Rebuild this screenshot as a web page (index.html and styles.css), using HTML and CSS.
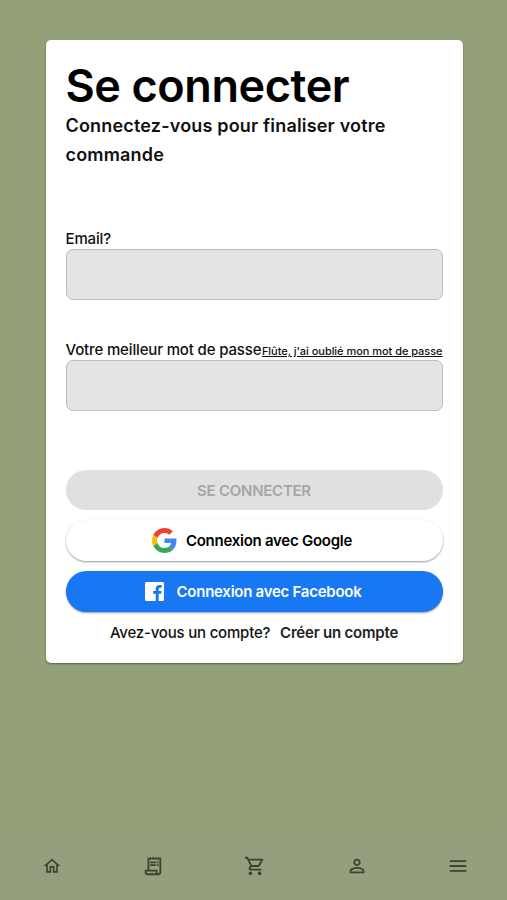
FILE: index.html
```
<!DOCTYPE html>
<html lang="fr">
<head>
  <meta charset="UTF-8" />
  <meta name="viewport" content="width=device-width, initial-scale=1.0"/>
  <title>Se connecter</title>
  <link rel="stylesheet" href="styles.css">
</head>
<body>
  <main class="card">
    <h1>Se connecter</h1>
    <h2>Connectez-vous pour finaliser votre commande</h2>

    <form class="login-form">
      <div class="field">
        <div class="field-head">
          <label for="email">Email?</label>
        </div>
        <input type="email" id="email" name="email" required />
      </div>
      <div class="field">
        <div class="field-head">
          <label for="password">Votre meilleur mot de passe</label>
          <a class="forgot" href="#">Flûte, j'ai oublié mon mot de passe</a>
        </div>
        <input type="password" id="password" name="password" required />
      </div>

      <button class="btn btn-submit" type="submit" disabled>SE CONNECTER</button>
      <button class="btn btn-google" type="button">
        <svg width="25" height="25" viewBox="0 0 48 48">
          <path fill="#EA4335" d="M24 9.5c3.54 0 6.71 1.22 9.21 3.6l6.85-6.85C35.9 2.38 30.47 0 24 0 14.62 0 6.51 5.38 2.56 13.22l7.98 6.19C12.43 13.72 17.74 9.5 24 9.5z"/>
          <path fill="#4285F4" d="M46.98 24.55c0-1.57-.15-3.09-.38-4.55H24v9.02h12.94c-.58 2.96-2.26 5.48-4.78 7.18l7.73 6c4.51-4.18 7.09-10.36 7.09-17.65z"/>
          <path fill="#FBBC05" d="M10.53 28.59c-.48-1.45-.76-2.99-.76-4.59s.27-3.14.76-4.59l-7.98-6.19C.92 16.46 0 20.12 0 24c0 3.88.92 7.54 2.56 10.78l7.97-6.19z"/>
          <path fill="#34A853" d="M24 48c6.48 0 11.93-2.13 15.89-5.81l-7.73-6c-2.15 1.45-4.92 2.3-8.16 2.3-6.26 0-11.57-4.22-13.47-9.91l-7.98 6.19C6.51 42.62 14.62 48 24 48z"/>
        </svg>
        <span>Connexion avec Google</span>
      </button>
      <button class="btn btn-facebook" type="button">
        <svg width="19" height="19" viewBox="0 0 19 19">
          <path fill="#fff" d="M1.5 0h16c.8 0 1.500.7 1.500 1.500v16c0 .8-.7 1.500-1.500 1.500h-3.800v-7.200h2.500l.4-2.900h-2.900V7.200c0-.9.4-1.500 1.500-1.500h1.500V3.100c-.4 0-1.300-.1-2.200-.1-2.300 0-3.800 1.300-3.800 3.800v2.100H8.100v2.900h2.600V19H1.500C.7 19 0 18.300 0 17.500v-16C0 .7.7 0 1.500 0z"/>
        </svg>
        <span>Connexion avec Facebook</span>
      </button>
    </form>

    <p class="signup">Avez-vous un compte? <a href="#">Créer un compte</a></p>
  </main>

  <nav class="bottom-nav">
    <a href="#" aria-label="Accueil">
      <svg width="20" height="20" viewBox="0 0 24 24"><path d="M12 5.690l5 4.500V18h-2v-6H9v6H7v-7.810l5-4.500M12 3L2 12h3v8h6v-6h2v6h6v-8h3L12 3z"/></svg>
    </a>
    <a href="#" aria-label="Commandes">
      <svg width="22" height="22" viewBox="0 0 24 24"><path d="M19.500 3.500L18 2l-1.500 1.500L15 2l-1.500 1.500L12 2l-1.500 1.500L9 2 7.500 3.500 6 2v14H3v3c0 1.660 1.340 3 3 3h12c1.660 0 3-1.340 3-3V2l-1.500 1.500zM15 20H6c-.55 0-1-.45-1-1v-1h10v2zm4-1c0 .55-.45 1-1 1s-1-.45-1-1v-3H8V5h11v14z"/><path d="M9 7h6v2H9zM16 7h2v2h-2zM9 10h6v2H9zM16 10h2v2h-2z"/></svg>
    </a>
    <a href="#" aria-label="Panier">
      <svg width="22" height="22" viewBox="0 0 24 24"><path d="M15.550 13c.75 0 1.410-.41 1.750-1.030l3.580-6.490c.37-.66-.11-1.480-.87-1.480H5.210l-.94-2H1v2h2l3.600 7.590-1.350 2.440C4.520 15.370 5.480 17 7 17h12v-2H7l1.100-2h7.450zM6.160 6h12.150l-2.760 5H8.530L6.160 6zM7 18c-1.100 0-1.990.9-1.990 2S5.900 22 7 22s2-.9 2-2-.9-2-2-2zm10 0c-1.100 0-1.990.9-1.990 2s.89 2 1.990 2 2-.9 2-2-.9-2-2-2z"/></svg>
    </a>
    <a href="#" aria-label="Profil">
      <svg width="22" height="22" viewBox="0 0 24 24"><path d="M12 5.900c1.160 0 2.100.94 2.100 2.100s-.94 2.100-2.100 2.100S9.900 9.160 9.900 8s.94-2.100 2.100-2.100m0 9c2.970 0 6.100 1.460 6.100 2.100v1.100H5.900V17c0-.64 3.130-2.100 6.100-2.100M12 4C9.790 4 8 5.790 8 8s1.790 4 4 4 4-1.790 4-4-1.790-4-4-4zm0 9c-2.670 0-8 1.340-8 4v3h16v-3c0-2.660-5.330-4-8-4z"/></svg>
    </a>
    <a href="#" aria-label="Menu">
      <svg width="20" height="20" viewBox="0 0 24 24"><path d="M2 5h20v2.200H2zM2 10.900h20v2.200H2zM2 16.800h20V19H2z"/></svg>
    </a>
  </nav>
</body>
</html>
```
FILE: styles.css
```
* {
  box-sizing: border-box;
}

body {
  margin: 0;
  height: 100vh;
  display: flex;
  flex-direction: column;
  align-items: center;
  background-color: #94a078;
  color: #111;
  font-family: Inter, sans-serif;
}

.card {
  width: 417px;
  height: 623px;
  margin-top: 40px;
  margin-left: 1px;
  padding: 20px;
  background-color: white;
  border-radius: 5px;
  box-shadow: 0 1px 2px rgba(0, 0, 0, 0.4);
}

h1 {
  margin: 0;
  font-size: 45px;
  line-height: 51px;
  font-weight: 600;
  letter-spacing: -0.4px;
  color: #000;
}

h2 {
  margin: 0;
  font-size: 18px;
  line-height: 29px;
  font-weight: 600;
  letter-spacing: 0.18px;
}

.login-form {
  display: flex;
  flex-direction: column;
  margin-top: 60px;
}

.field {
  margin-bottom: 40px;
}

.field-head {
  display: flex;
  justify-content: space-between;
  align-items: baseline;
  height: 20px;
  line-height: 20px;
  font-size: 15px;
  font-weight: 500;
  letter-spacing: -0.15px;
  white-space: nowrap;
}

.forgot {
  font-size: 11px;
  letter-spacing: -0.04px;
  color: inherit;
}

input {
  display: block;
  width: 100%;
  height: 51px;
  padding: 0 12px;
  border: 1.5px solid #bdbdbd;
  border-radius: 7px;
  background-color: #e4e4e4;
  font-size: 15px;
}

.btn {
  display: flex;
  align-items: center;
  justify-content: center;
  border: none;
  border-radius: 21px;
  font-family: inherit;
  font-size: 15px;
  font-weight: 600;
  letter-spacing: -0.26px;
}

.btn-submit {
  height: 40px;
  margin-top: 19px;
  background-color: #e0e0e0;
  color: #a6a6a6;
}

.btn-google {
  height: 41px;
  margin-top: 10px;
  gap: 9px;
  padding-right: 10px;
  background-color: white;
  color: #000;
  box-shadow: 0 1px 2px rgba(0, 0, 0, 0.4);
}

.btn-facebook {
  height: 41px;
  margin-top: 10px;
  gap: 13px;
  padding-right: 8px;
  background-color: #1877f2;
  color: white;
  box-shadow: 0 1px 2px rgba(0, 0, 0, 0.4);
}

.signup {
  margin: 11px 0 0;
  font-size: 15px;
  line-height: 20px;
  font-weight: 500;
  letter-spacing: -0.2px;
  text-align: center;
}

.signup a {
  margin-left: 6px;
  color: #222;
  font-weight: 600;
  text-decoration: none;
}

.bottom-nav {
  display: flex;
  justify-content: space-between;
  align-items: center;
  width: 100%;
  height: 68px;
  margin-top: auto;
  padding: 0 39px 0 42px;
  background-color: #959f7d;
}

.bottom-nav a {
  display: flex;
}

.bottom-nav svg {
  fill: #3c4331;
}
```
